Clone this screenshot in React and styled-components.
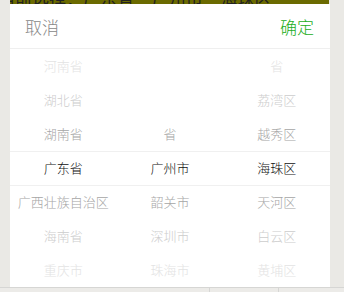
import React from "react";
import styled, { createGlobalStyle } from "styled-components";

const GlobalStyle = createGlobalStyle`
  html, body {
    margin: 0;
    padding: 0;
    background: #eae9e5;
    font-family: "Noto Sans CJK SC", "Noto Sans", sans-serif;
  }
`;

const columns = [
  { items: ["河南省", "湖北省", "湖南省", "广东省", "广西壮族自治区", "海南省", "重庆市"] },
  { items: ["", "", "省", "广州市", "韶关市", "深圳市", "珠海市"] },
  { items: ["省", "荔湾区", "越秀区", "海珠区", "天河区", "白云区", "黄埔区"] },
];

const SELECTED = 3;
const fade = ["#111", "#a6a6a6", "#cdcdcd", "#e3e3e3"];

const App = () => {
  return (
    <>
      <GlobalStyle />
      <Page>
        <Strip>
          <StripText>当前选择：广东省 广州市 海珠区</StripText>
        </Strip>
        <Panel>
          <Header>
            <Cancel>取消</Cancel>
            <Confirm>确定</Confirm>
          </Header>
          <Wheel>
            <Band />
            {columns.map((col, ci) => (
              <Column key={ci}>
                {col.items.map((item, i) => (
                  <Item key={i} color={fade[Math.abs(i - SELECTED)]}>
                    {item}
                  </Item>
                ))}
              </Column>
            ))}
          </Wheel>
        </Panel>
      </Page>
      <Footer>
        <FooterCell width="209px" />
        <FooterCell width="68px" />
        <FooterCell />
      </Footer>
    </>
  );
};

export default App;

const Page = styled.div`
  width: 320px;
  margin-left: 10px;
`;

const Strip = styled.div`
  position: relative;
  height: 4px;
  overflow: hidden;
  contain: paint;
  clip-path: inset(0);
  background: #6b6a00;
  margin-right: 1px;
  display: flex;
  align-items: flex-end;
`;

const StripText = styled.div`
  flex: none;
  line-height: 17px;
  font-size: 17px;
  color: #222;
  white-space: nowrap;
  margin-left: -12px;
  margin-bottom: -2px;
  word-spacing: 14px;
`;

const Panel = styled.div`
  position: relative;
  z-index: 1;
  background: #fff;
`;

const Header = styled.div`
  height: 44px;
  display: flex;
  align-items: center;
  justify-content: space-between;
  padding: 0 16px 0 15px;
  border-bottom: 1px solid #efefef;
  font-size: 17px;
  font-weight: 300;
`;

const Cancel = styled.span`
  color: #888;
`;

const Confirm = styled.span`
  color: #1aad19;
`;

const Wheel = styled.div`
  position: relative;
  display: flex;
`;

const Band = styled.div`
  position: absolute;
  left: 0;
  right: 0;
  top: 102px;
  height: 33px;
  border-top: 1px solid #f0f0f0;
  border-bottom: 1px solid #f0f0f0;
  pointer-events: none;
`;

const Column = styled.div`
  flex: 1;
  display: flex;
  flex-direction: column;
`;

const Item = styled.div`
  height: 34px;
  line-height: 34px;
  text-align: center;
  font-size: 13px;
  font-weight: 300;
  color: ${p => p.color};
  white-space: nowrap;
`;

const Footer = styled.div`
  display: flex;
  height: 5px;
  border-top: 1px solid #d6d6d4;
  background: #ecebe8;
`;

const FooterCell = styled.div`
  width: ${p => p.width || "auto"};
  flex: ${p => (p.width ? "none" : "1")};
  border-right: 1px solid #d6d6d4;
  &:last-child {
    border-right: none;
  }
`;
